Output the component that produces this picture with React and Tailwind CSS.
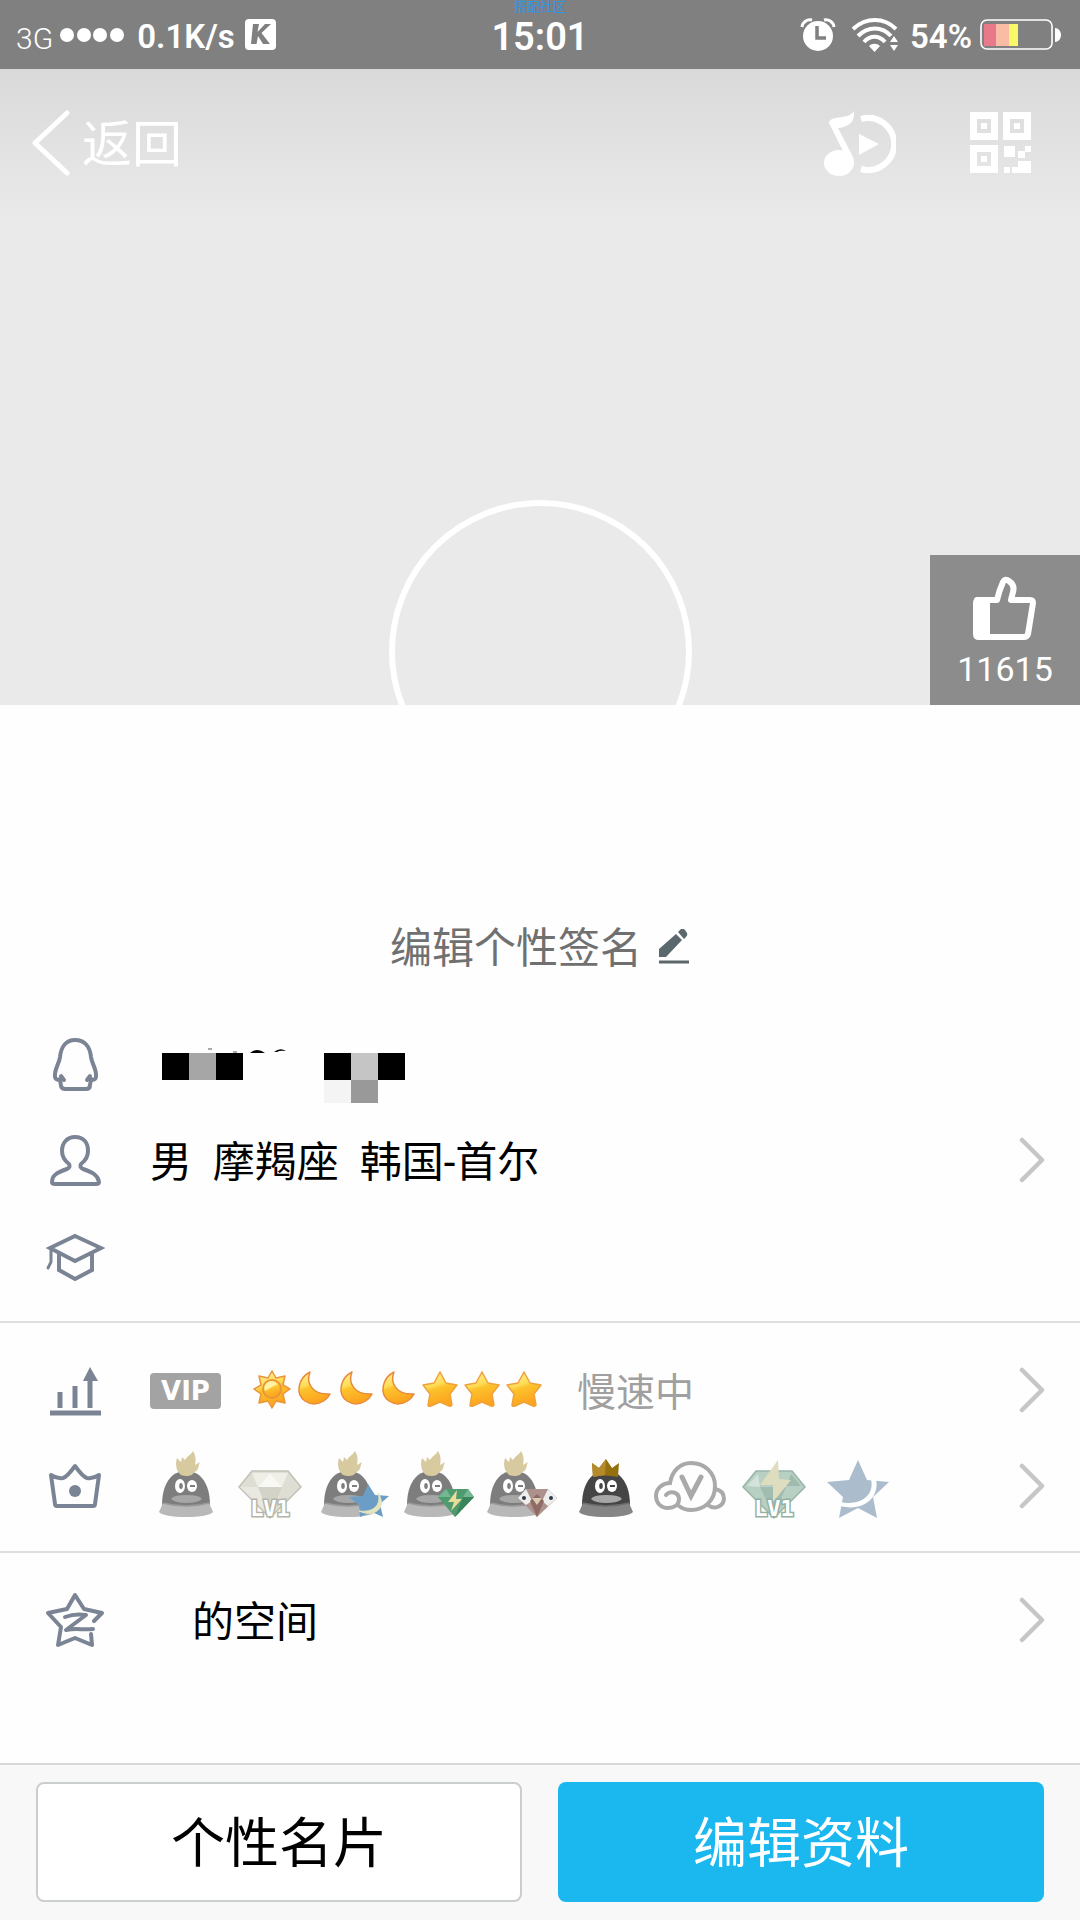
import React from "react";

const STROKE = "#7b8494";

/* ---------- status bar ---------- */

function SignalDots() {
  return (
    <svg width="66" height="16" viewBox="0 0 66 16" fill="#fff" aria-hidden="true">
      <circle cx="8" cy="8" r="7" />
      <circle cx="25" cy="8" r="7" />
      <circle cx="41" cy="8" r="7" />
      <circle cx="58" cy="8" r="7" />
    </svg>
  );
}

function KBadge() {
  return (
    <svg width="32" height="32" viewBox="0 0 32 32" aria-hidden="true">
      <rect x="0" y="0" width="31" height="31" rx="4" fill="#fff" />
      <path d="M8 5h6l-1.500 8L20 5h6L16.500 14 25 25h-7l-5-8-1.500 8H6z" fill="#808080" />
    </svg>
  );
}

function AlarmIcon() {
  return (
    <svg width="36" height="36" viewBox="0 0 36 36" aria-hidden="true">
      <circle cx="18" cy="19" r="15" fill="#fff" />
      <path d="M2 10a8 8 0 0 1 10-7M34 10a8 8 0 0 0-10-7" stroke="#fff" strokeWidth="3" fill="none" />
      <path d="M17 9v12h9" stroke="#808080" strokeWidth="3.500" fill="none" />
    </svg>
  );
}

function WifiIcon() {
  return (
    <svg width="46" height="36" viewBox="0 0 46 36" aria-hidden="true">
      <g fill="none" stroke="#fff" strokeWidth="4">
        <path d="M1 12C14 0 32 0 44 12" />
        <path d="M6 19C16 9 30 9 39 19" />
        <path d="M12 25C18 18 27 18 33 25" />
      </g>
      <path d="M17 29c3-3 8-3 11 0l-5.500 6z" fill="#fff" />
      <path d="M38 25l4-6 4 6zM38 28h8l-4 6z" fill="#fff" />
    </svg>
  );
}

function BatteryIcon() {
  return (
    <svg width="82" height="32" viewBox="0 0 82 32" aria-hidden="true">
      <rect x="1" y="1" width="71" height="29" rx="6" fill="none" stroke="#fff" strokeWidth="1.600" />
      <rect x="4" y="5" width="12" height="22" fill="#e8798a" />
      <rect x="16" y="5" width="13" height="22" fill="#fbbca6" />
      <rect x="29" y="5" width="9" height="22" fill="#f9f866" />
      <path d="M75 9c4 0 6 4 6 7s-2 7-6 7z" fill="#fff" />
    </svg>
  );
}

function StatusBar() {
  return (
    <div className="relative grid h-[69px] grid-cols-[1fr_auto_1fr] items-center bg-[#808080] text-white">
      <span className="absolute left-1/2 top-0 -translate-x-1/2 text-[13px] leading-[13px] text-[#2f96e0]">搭配社区</span>
      <div className="flex items-center pl-4">
        <span className="mt-2 text-[30px] font-light leading-9">3G</span>
        <span className="ml-1.5"><SignalDots /></span>
        <span className="ml-3 pt-1 text-[33px] font-semibold leading-9">0.1K/s</span>
        <span className="ml-2.5"><KBadge /></span>
      </div>
      <span className="pt-1 text-[38px] font-semibold leading-10">15:01</span>
      <div className="flex items-center justify-end pr-[18px]">
        <AlarmIcon />
        <span className="ml-4"><WifiIcon /></span>
        <span className="ml-3 pt-1 text-[33px] font-semibold leading-9">54%</span>
        <span className="ml-2"><BatteryIcon /></span>
      </div>
    </div>
  );
}

/* ---------- cover ---------- */

function BackIcon() {
  return (
    <svg width="38" height="66" viewBox="0 0 38 66" aria-hidden="true">
      <path d="M35 3L3 33L35 63" fill="none" stroke="#fff" strokeWidth="5" strokeLinecap="round" strokeLinejoin="round" />
    </svg>
  );
}

function MusicIcon() {
  return (
    <svg width="72" height="72" viewBox="0 0 72 72" aria-hidden="true">
      <ellipse cx="15" cy="56" rx="15" ry="13" fill="#fff" />
      <path d="M5 15C8 8 25 13 30 4C31 14 26 20 14 21L28 48Q31 54 28 59L22 50L6 18Q5 16 5 15z" fill="#fff" />
      <path d="M35 27L55 37L35 48z" fill="#fff" />
      <path d="M37 12A26 26 0 1 1 37 62" fill="none" stroke="#fff" strokeWidth="6" />
    </svg>
  );
}

function QrIcon() {
  return (
    <svg width="62" height="62" viewBox="0 0 62 62" fill="#fff" aria-hidden="true">
      {[[0, 0], [33, 0], [0, 33]].map(([x, y]) => (
        <g key={`${x}-${y}`}>
          <path fillRule="evenodd" d={`M${x} ${y}h28v28h-28zM${x + 7} ${y + 7}v14h14v-14z`} />
          <rect x={x + 11} y={y + 11} width="6" height="6" />
        </g>
      ))}
      <path d="M34 34h11v11h-11zM48 39h7v-5h6v6h-6v6h-7zM34 55h6v6h-6zM42 55h6v-6h13v12h-19z" />
    </svg>
  );
}

function ThumbIcon() {
  return (
    <svg width="68" height="68" viewBox="0 0 68 68" aria-hidden="true">
      <path
        d="M6 25H26Q28 16 32 7Q34 3 38 6Q44 10 42 17Q41 21 40 25H59Q62 25 62 28L57 59Q56 62 53 62H8Q5 62 5 59V28Q5 25 8 25z"
        fill="none" stroke="#fff" strokeWidth="6" strokeLinejoin="round"
      />
      <path d="M5 25H19V62H5z" fill="#fff" />
    </svg>
  );
}

function Cover() {
  return (
    <header className="relative bg-[#eaeaea] bg-[linear-gradient(#d9d9d9_0,#eaeaea_150px)]">
      <nav className="flex h-[148px] items-center pl-8 pr-12 text-white">
        <button type="button" className="flex items-center gap-3">
          <BackIcon />
          <span className="pt-1 text-[50px] leading-[60px]">返回</span>
        </button>
        <div className="ml-auto flex items-center gap-[74px]">
          <button type="button" aria-label="音乐"><MusicIcon /></button>
          <button type="button" aria-label="二维码"><QrIcon /></button>
        </div>
      </nav>
      <div className="mt-[283px] h-[205px] overflow-hidden">
        <div className="mx-auto size-[303px] rounded-full border-6 border-white" />
      </div>
      <button type="button" className="absolute bottom-0 right-0 flex size-[150px] flex-col items-center bg-[#8c8c8c] pt-5 text-white">
        <ThumbIcon />
        <span className="mt-1.5 text-[34px] leading-10">11615</span>
      </button>
    </header>
  );
}

/* ---------- row icons ---------- */

function RowIcon({ children, x = 0 }) {
  return (
    <svg width="60" height="60" viewBox="0 0 60 60" fill="none" stroke={STROKE} strokeWidth="4" strokeLinecap="round" strokeLinejoin="round" className="shrink-0" aria-hidden="true">
      <g transform={`translate(${x} 0)`}>{children}</g>
    </svg>
  );
}

const PenguinOutline = () => (
  <RowIcon x={2}>
    <path d="M28 5C19 5 14 12 13 22C12 30 7 34 8 42Q9 46 13 44L14 51Q15 54 18 54H39Q43 54 43 50L44 44Q48 46 49 42C50 34 45 30 44 22C43 12 38 5 28 5z" />
    <path d="M14 41l3 4M43 41l-3 4" strokeWidth="4" />
  </RowIcon>
);

const PersonOutline = () => (
  <RowIcon x={1}>
    <path d="M29 6C21 6 16 12 16 20C16 26 19 30 23 33Q25 36 21 38C12 41 6 44 6 51Q6 53 9 53H50Q53 53 53 51C52 44 46 41 37 38Q33 36 35 33C39 30 42 26 42 20C42 12 38 6 29 6z" />
  </RowIcon>
);

const CapOutline = () => (
  <RowIcon x={2}>
    <g strokeLinejoin="miter">
      <path d="M28 9L54 21L28 34L3 21z" />
      <path d="M12 27V43L28 52L45 43V27" />
      <path d="M4 23V35L1 41" strokeWidth="3" />
    </g>
  </RowIcon>
);

const ChartIcon = () => (
  <RowIcon x={1}>
    <g strokeLinecap="butt" strokeWidth="5">
      <path d="M14 31V47M29 25V47M44 17V47M4 52H55" />
    </g>
    <path d="M44 6L52 20H37z" fill={STROKE} stroke="none" />
  </RowIcon>
);

const CrownOutline = () => (
  <RowIcon>
    <path d="M6 18L10 47Q10 49 12 49H48Q50 49 50 47L54 18Q48 22 42 21Q38 20 30 9Q22 20 18 21Q12 22 6 18z" />
    <circle cx="30" cy="34" r="6" fill={STROKE} stroke="none" />
  </RowIcon>
);

const ZoneStar = () => (
  <RowIcon>
    <path d="M49 30L57 22L39 18L30 4L22 18L3 22L16 36L13 54L30 47L47 54L46 43" />
    <path d="M20 26C28 23 35 23 41 24L21 39C30 37 38 39 48 38" />
  </RowIcon>
);

function Chevron() {
  return (
    <svg width="28" height="48" viewBox="0 0 28 48" className="ml-auto shrink-0" aria-hidden="true">
      <path d="M4 3L24 23L4 43" fill="none" stroke="#c6c6c6" strokeWidth="4.500" strokeLinecap="round" strokeLinejoin="round" />
    </svg>
  );
}

/* ---------- level icons ---------- */

function GoldDefs() {
  return (
    <svg width="0" height="0" className="absolute" aria-hidden="true">
      <defs>
        <linearGradient id="gold" x1="0" y1="0" x2="0.300" y2="1">
          <stop offset="0" stopColor="#fff3a0" />
          <stop offset="0.450" stopColor="#fddb55" />
          <stop offset="0.550" stopColor="#fcc22c" />
          <stop offset="1" stopColor="#fda41f" />
        </linearGradient>
      </defs>
    </svg>
  );
}

function LevelIcon({ kind }) {
  return (
    <svg width="42" height="42" viewBox="0 0 42 42" fill="url(#gold)" strokeLinejoin="round" aria-hidden="true">
      {kind === "sun" && (
        <g stroke="#e9963a" strokeWidth="1.500">
          <path d="M21 1L25 8L34 6L32 15L39 19L32 24L34 33L25 31L21 38L17 31L8 33L10 24L3 19L10 15L8 6L17 8z" />
          <circle cx="21" cy="19" r="9" strokeWidth="2" />
          <path d="M14 21a7 7 0 0 1 12-7z" fill="#fff2a4" stroke="none" />
        </g>
      )}
      {kind === "moon" && (
        <path d="M17 2C13 12 18 25 37 24C32 33 21 37 12 31C2 24 5 8 17 2z" stroke="#e88a3c" strokeWidth="1.500" />
      )}
      {kind === "star" && (
        <path d="M21 2L27 13L38 15L31 24L33 35Q32 37 30 36L21 32L12 36Q9 37 9 35L11 24L4 15L15 13z" stroke="#efa23c" strokeWidth="1.500" />
      )}
    </svg>
  );
}

/* ---------- privilege badges ---------- */

function Badge({ children }) {
  return (
    <svg width="72" height="72" viewBox="0 0 72 72" className="shrink-0" aria-hidden="true">
      {children}
    </svg>
  );
}

function Penguin({ shift = 0, dark = false }) {
  const body = dark ? "#454545" : "#7d7d7d";
  return (
    <g transform={`translate(${shift} 0)`}>
      <path d="M12 54C12 40 16 30 23 24Q29 20 36 20Q43 20 49 24C56 30 60 40 60 54L56 60H16z" fill={body} />
      <path d="M13 52Q36 58 59 52L63 61Q58 66 36 66Q14 66 9 61z" fill={dark ? "#858585" : "#b8b8b8"} />
      <path d="M13 52Q36 58 59 52" fill="none" stroke={dark ? "#6c6c6c" : "#999"} strokeWidth="1.500" />
      <ellipse cx="30" cy="35" rx="5" ry="7" fill="#fff" />
      <ellipse cx="42" cy="35" rx="5" ry="6" fill="#fff" />
      <ellipse cx="31" cy="35" rx="1.800" ry="3" fill={body} />
      <path d="M40 35h5" fill="none" stroke={body} strokeWidth="2" />
      <path d="M21 48Q23 44 36 44Q50 44 52 48Q48 52 36 52Q25 52 21 48z" fill="#a6a6a6" />
      {dark ? (
        <>
          <path d="M22 12L29 17L36 8L42 17L49 12L48 26Q35 23 23 26z" fill="#94700f" />
          <path d="M22 12L29 17L36 8L35 24L23 26z" fill="#b58a2a" />
        </>
      ) : (
        <path d="M31 24C26 20 25 13 27 7L31 11L32 6L35 9C37 5 41 4 43 0C46 5 46 9 45 14L50 11C48 15 49 20 44 21C43 25 36 26 31 24z" fill="#d8ca9f" />
      )}
    </g>
  );
}

function LevelMark({ color }) {
  return (
    <text x="36" y="65" textAnchor="middle" fontSize="22" fontWeight="700" fill="#fff" stroke={color} strokeWidth="3" paintOrder="stroke" className="font-['DejaVu_Sans_Mono',monospace]">
      LV1
    </text>
  );
}

const badges = [
  <Penguin />,
  <>
    <path d="M18 20H54L67 36L36 67L5 36z" fill="#deded4" stroke="#c2c2b6" strokeWidth="1.500" />
    <path d="M18 22L24 36L36 22L48 36L54 22z" fill="#efefe8" />
    <path d="M24 36L36 22L48 36z" fill="#f8f8f4" />
    <path d="M6 36H24L36 65z" fill="#e9e9e2" />
    <path d="M24 36H48L36 65z" fill="#d3d3c8" />
    <LevelMark color="#b4b4a8" />
  </>,
  <>
    <Penguin shift={-6} />
    <path d="M50 33L57 44L71 45L62 53L65 66L54 61L42 66L41 54L31 46L45 45z" fill="#6c9dc6" />
    <path d="M60 42C64 54 55 62 41 60C56 67 70 57 60 42z" fill="#e5e5bd" stroke="#e5e5bd" />
  </>,
  <>
    <Penguin shift={-7} />
    <path d="M44 38H66L72 46L53 66L36 46z" fill="#4f9b70" />
    <path d="M44 38L49 46L36 46zM66 38L61 46H72z" fill="#75b793" />
    <path d="M61 46H72L53 66z" fill="#3b855c" />
    <path d="M55 39L46 51L52 51L49 60L60 48L54 48z" fill="#e6dd9a" />
  </>,
  <>
    <Penguin shift={-8} />
    <path d="M40 38H62L71 47L51 66L32 47z" fill="#ad918c" />
    <path d="M40 38L46 50L40 54L32 47zM62 38L56 50L62 55L71 47z" fill="#eeeeee" />
    <path d="M44 50L51 43L58 50L51 66z" fill="#8f6b67" />
    <path d="M46 47h10l-5 7z" fill="#d9ccb0" />
    <circle cx="38" cy="47" r="2" fill="#2f3a44" />
    <circle cx="65" cy="47" r="2" fill="#2f3a44" />
  </>,
  <Penguin dark />,
  <g fill="none" stroke="#a9a9a9" strokeWidth="4" strokeLinecap="round">
    <path d="M12 44C16 39 25 41 25 48C25 54 20 57 14 57C6 57 2 51 2 45C2 37 9 32 16 32C18 20 26 12 37 12C51 12 61 22 61 35C61 50 50 59 37 59Q30 59 25 55" />
    <path d="M61 38C67 39 70 43 70 48C69 56 60 59 54 54" />
    <path d="M28 26L37 45L47 26" strokeWidth="5" />
  </g>,
  <>
    <path d="M18 20H54L67 36L36 67L5 36z" fill="#b8cfc4" stroke="#99b5a8" strokeWidth="1.500" />
    <path d="M20 23L9 35L22 36z" fill="#d3e3db" />
    <path d="M53 23L63 35H48z" fill="#9fbbad" />
    <path d="M22 36H48L36 65z" fill="#a1bdb0" />
    <path d="M40 9L22 34H35L35 51L53 29L41 28z" fill="#dfddbf" />
    <LevelMark color="#93b0a3" />
  </>,
  <>
    <path d="M36 9L45 29L67 31L51 46L55 67L36 57L17 67L21 46L5 31L27 29z" fill="#abbccd" />
    <path d="M49 28C53 45 38 55 18 51V55C41 61 58 47 54 28z" fill="#fff" />
  </>,
];

/* ---------- rows ---------- */

function Mosaic() {
  return (
    <svg width="264" height="76" viewBox="0 0 264 76" className="shrink-0" role="img" aria-label="已打码">
      <path d="M12 26h27v27h-27zM66 26h27v27h-27zM174 26h27v27h-27zM228 26h27v27h-27z" fill="#000" />
      <rect x="39" y="26" width="27" height="27" fill="#a6a6a6" />
      <rect x="201" y="26" width="27" height="27" fill="#c5c5c5" />
      <rect x="174" y="53" width="27" height="27" fill="#f4f4f4" />
      <rect x="201" y="53" width="27" height="27" fill="#999" />
      <path d="M100 26q7-6 15 0zM124 25q6-5 12-1q-6-1-9 1z" fill="#000" />
      <path d="M58 22h4M83 25h4" stroke="#555" />
    </svg>
  );
}

function Row({ icon, children, chevron }) {
  return (
    <>
      {chevron ? (
        <button type="button" className="flex h-24 w-full items-center pl-[45px] pr-[34px] text-left">
          {icon}
          <span className="ml-[45px] flex items-center">{children}</span>
          <Chevron />
        </button>
      ) : (
        <div className="flex h-24 items-center pl-[45px] pr-[34px]">
          {icon}
          <span className="ml-[45px] flex items-center">{children}</span>
        </div>
      )}
    </>
  );
}

const levels = ["sun", "moon", "moon", "moon", "star", "star", "star"];

export default function App() {
  return (
    <div className="flex min-h-screen flex-col bg-[#fefefe] font-[Roboto,'Noto_Sans_CJK_SC',sans-serif] text-black">
      <StatusBar />
      <Cover />
      <main className="flex-1">
        <button type="button" className="mx-auto mt-[212px] flex h-[60px] items-center gap-4 text-[42px] text-[#707070]">
          <span className="pt-1 leading-[60px]">编辑个性签名</span>
          <svg width="32" height="36" viewBox="0 0 32 36" aria-hidden="true">
            <path d="M1 33H31" stroke="#5d666b" strokeWidth="3" />
            <path d="M1 20L18 5L24 11L8 28H1zM20 3L23 0Q25 -1 27 1L29 4Q30 6 28 8L26 10z" fill="#5a686e" />
          </svg>
        </button>

        <section className="mt-10 border-b-2 border-[#dedede] pb-4">
          <Row icon={<PenguinOutline />}><Mosaic /></Row>
          <Row icon={<PersonOutline />} chevron>
            <span className="whitespace-pre pt-1 text-[42px] leading-[60px]">男  摩羯座  韩国-首尔</span>
          </Row>
          <Row icon={<CapOutline />} />
        </section>

        <section className="border-b-2 border-[#dedede] pb-4 pt-5">
          <Row icon={<ChartIcon />} chevron>
            <span className="flex h-9 w-[71px] items-center justify-center rounded-sm bg-[#a3a3a3] font-['DejaVu_Sans',sans-serif] text-[26px] font-bold text-white">VIP</span>
            <GoldDefs />
            <span className="ml-[30px] flex">
              {levels.map((kind, i) => <LevelIcon key={i} kind={kind} />)}
            </span>
            <span className="ml-8 pt-1 text-[39px] leading-[60px] text-[#a0a0a0]">慢速中</span>
          </Row>
          <Row icon={<CrownOutline />} chevron>
            <span className="flex gap-3">
              {badges.map((art, i) => <Badge key={i}>{art}</Badge>)}
            </span>
          </Row>
        </section>

        <section className="pt-5">
          <Row icon={<ZoneStar />} chevron>
            <span className="pl-[42px] pt-1 text-[42px] leading-[60px]">的空间</span>
          </Row>
        </section>
      </main>

      <footer className="grid grid-cols-2 gap-9 border-t-2 border-[#d8d8d8] bg-[#f8f8f8] px-9 pb-[18px] pt-[17px]">
        <button type="button" className="h-[120px] rounded-lg border-2 border-[#cbcfcb] bg-white pt-1 text-[54px]">个性名片</button>
        <button type="button" className="h-[120px] rounded-lg bg-[#1bb8ef] pt-1 text-[54px] text-white">编辑资料</button>
      </footer>
    </div>
  );
}
